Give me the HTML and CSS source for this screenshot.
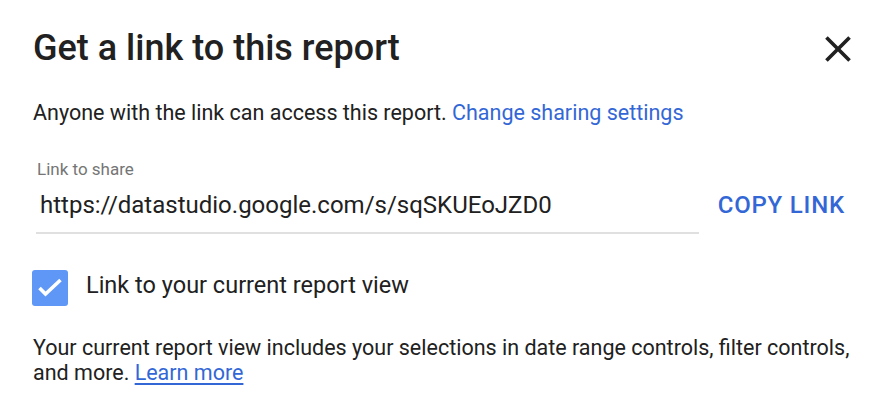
FILE: index.html
```html
<!DOCTYPE html>
<html>
<head>
<meta charset="utf-8">
<link rel="stylesheet" href="styles.css">
</head>
<body>
<div class="dialog">
  <div class="header">
    <h1 class="title">Get a link to this report</h1>
    <svg class="close" viewBox="0 0 24 24" width="44" height="44"><path d="M19 6.41L17.59 5 12 10.59 6.41 5 5 6.41 10.59 12 5 17.59 6.41 19 12 13.41 17.59 19 19 17.59 13.41 12z" fill="#212121"/></svg>
  </div>
  <p class="info">Anyone with the link can access this report. <a class="link">Change sharing settings</a></p>
  <div class="share-row">
    <div class="field">
      <div class="field-label">Link to share</div>
      <div class="field-value">https://datastudio.google.com/s/sqSKUEoJZD0</div>
    </div>
    <div class="copy">COPY LINK</div>
  </div>
  <div class="check-row">
    <svg class="checkbox" viewBox="0 0 36 36" width="36" height="36"><rect width="36" height="36" rx="3" fill="#5e97f6"/><polyline points="7.5,18 13.5,24 28.5,10" fill="none" stroke="#fff" stroke-width="3.6"/></svg>
    <span class="check-label">Link to your current report view</span>
  </div>
  <p class="note">Your current report view includes your selections in date range controls, filter controls, and more. <a class="link underline">Learn more</a></p>
</div>
</body>
</html>
```
FILE: styles.css
```css
html, body {
  margin: 0;
  padding: 0;
  background: #ffffff;
}
body {
  font-family: Roboto, "Liberation Sans", sans-serif;
  color: #212121;
}
.dialog {
  padding: 28px 34px 0 33px;
}
.header {
  display: flex;
  justify-content: space-between;
  align-items: flex-start;
  height: 44px;
}
.title {
  margin: 0;
  font-size: 36px;
  line-height: 40px;
  font-weight: 500;
  color: #212121;
}
.close {
  display: block;
  margin-top: -1px;
}
.info {
  margin: 28px 0 0 0;
  font-size: 21.5px;
  line-height: 26px;
}
.link {
  color: #3367d6;
}
.underline {
  text-decoration: underline;
  text-underline-offset: 3px;
}
.share-row {
  display: flex;
  align-items: flex-end;
  margin-top: 33px;
}
.field {
  flex: 1;
  margin-left: 3px;
  border-bottom: 2px solid #e0e0e0;
  padding-bottom: 13px;
}
.field-label {
  font-size: 17px;
  line-height: 20px;
  color: #757575;
  padding-left: 1px;
}
.field-value {
  margin-top: 12px;
  font-size: 24px;
  line-height: 28px;
  padding-left: 4px;
}
.copy {
  font-size: 24px;
  font-weight: 500;
  color: #3367d6;
  line-height: 28px;
  letter-spacing: 0.8px;
  padding: 0 15px 0 19px;
  margin-bottom: 15px;
}
.check-row {
  display: flex;
  align-items: flex-start;
  margin-top: 36px;
}
.checkbox {
  display: block;
  margin-left: -1px;
}
.check-label {
  font-size: 23.5px;
  line-height: 28px;
  margin-left: 18px;
  margin-top: 1px;
}
.note {
  margin: 29px 0 0 0;
  font-size: 21.5px;
  line-height: 25px;
}
```
